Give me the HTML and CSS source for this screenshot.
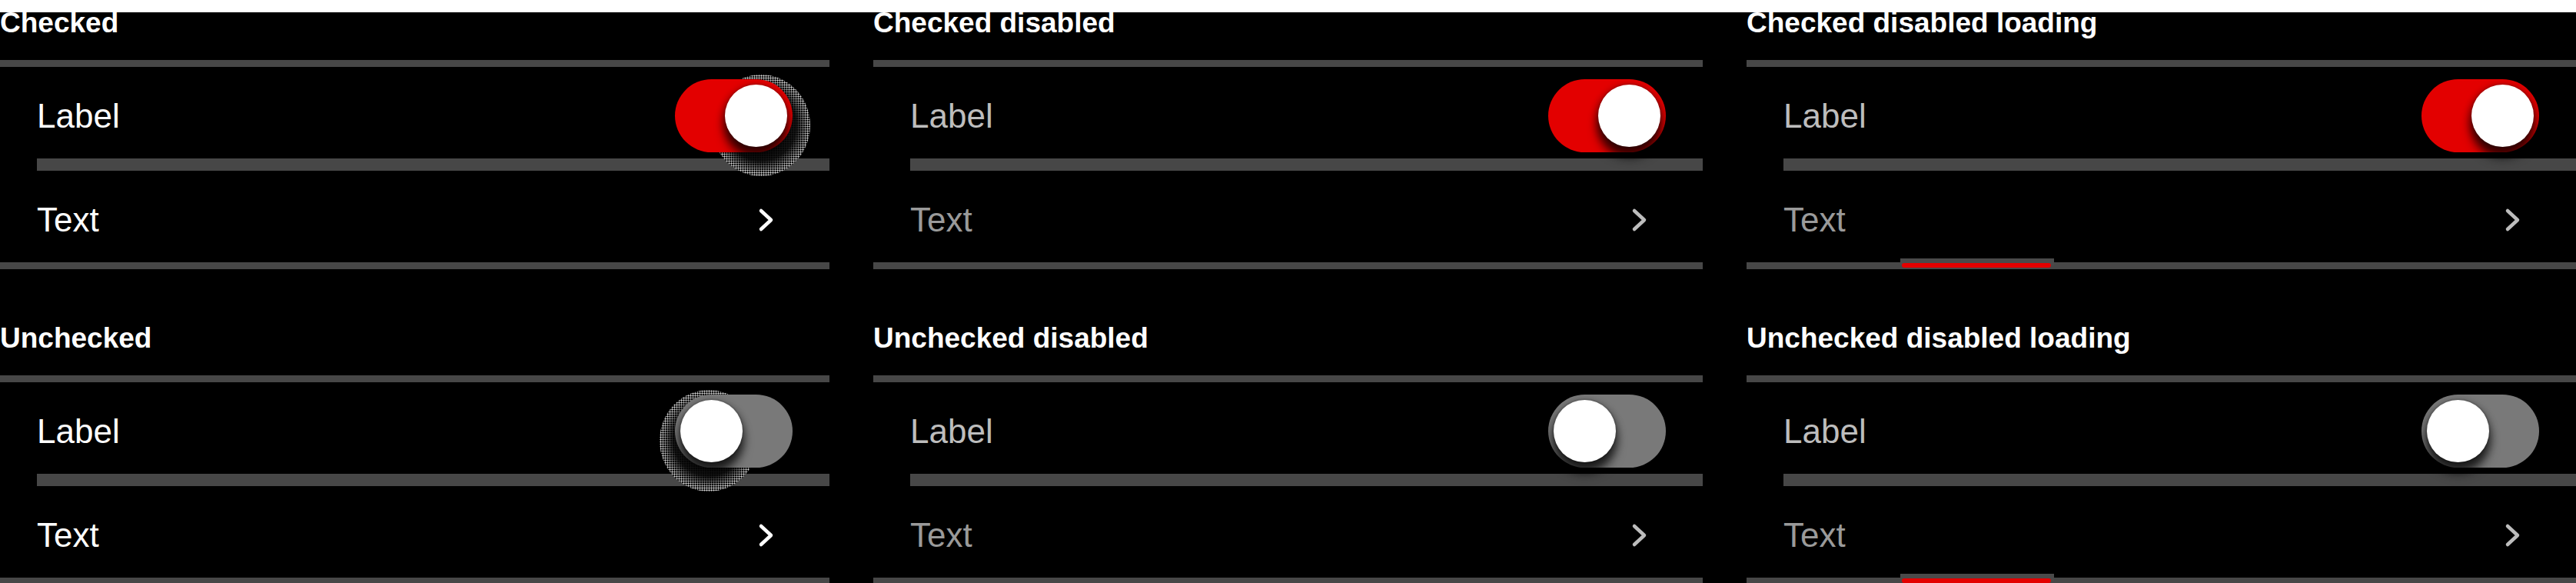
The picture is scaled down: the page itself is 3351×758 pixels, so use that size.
FILE: index.html
```html
<!DOCTYPE html>
<html lang="en">
<head>
<meta charset="utf-8">
<title>Switch list items</title>
<link rel="stylesheet" href="styles.css">
</head>
<body>
<div class="topband"></div>
<main class="board">
  <div class="column">
    <section class="group">
      <h2 class="group-title">Checked</h2>
      <div class="list">
        <div class="row row-label">
          <span class="label">Label</span>
          <span class="switch is-on has-focus"><span class="track"><span class="knob"></span></span></span>
        </div>
        <div class="row row-text">
          <span class="text">Text</span>
          <svg class="chev" viewBox="0 0 24 36" aria-hidden="true"><path d="M6 6 L19 18 L6 30"/></svg>
        </div>
      </div>
    </section>
    <section class="group">
      <h2 class="group-title">Unchecked</h2>
      <div class="list">
        <div class="row row-label">
          <span class="label">Label</span>
          <span class="switch is-off has-focus"><span class="track"><span class="knob"></span></span></span>
        </div>
        <div class="row row-text">
          <span class="text">Text</span>
          <svg class="chev" viewBox="0 0 24 36" aria-hidden="true"><path d="M6 6 L19 18 L6 30"/></svg>
        </div>
      </div>
    </section>
  </div>

  <div class="column muted">
    <section class="group">
      <h2 class="group-title">Checked disabled</h2>
      <div class="list">
        <div class="row row-label">
          <span class="label">Label</span>
          <span class="switch is-on"><span class="track"><span class="knob"></span></span></span>
        </div>
        <div class="row row-text">
          <span class="text">Text</span>
          <svg class="chev" viewBox="0 0 24 36" aria-hidden="true"><path d="M6 6 L19 18 L6 30"/></svg>
        </div>
      </div>
    </section>
    <section class="group">
      <h2 class="group-title">Unchecked disabled</h2>
      <div class="list">
        <div class="row row-label">
          <span class="label">Label</span>
          <span class="switch is-off"><span class="track"><span class="knob"></span></span></span>
        </div>
        <div class="row row-text">
          <span class="text">Text</span>
          <svg class="chev" viewBox="0 0 24 36" aria-hidden="true"><path d="M6 6 L19 18 L6 30"/></svg>
        </div>
      </div>
    </section>
  </div>

  <div class="column muted">
    <section class="group">
      <h2 class="group-title">Checked disabled loading</h2>
      <div class="list">
        <div class="row row-label">
          <span class="label">Label</span>
          <span class="switch is-on"><span class="track"><span class="knob"></span></span></span>
        </div>
        <div class="row row-text">
          <span class="text">Text</span>
          <svg class="chev" viewBox="0 0 24 36" aria-hidden="true"><path d="M6 6 L19 18 L6 30"/></svg>
        </div>
        <span class="loader"></span>
      </div>
    </section>
    <section class="group">
      <h2 class="group-title">Unchecked disabled loading</h2>
      <div class="list">
        <div class="row row-label">
          <span class="label">Label</span>
          <span class="switch is-off"><span class="track"><span class="knob"></span></span></span>
        </div>
        <div class="row row-text">
          <span class="text">Text</span>
          <svg class="chev" viewBox="0 0 24 36" aria-hidden="true"><path d="M6 6 L19 18 L6 30"/></svg>
        </div>
        <span class="loader"></span>
      </div>
    </section>
  </div>
</main>
</body>
</html>
```

FILE: styles.css
```css
html, body {
  margin: 0;
  padding: 0;
}

body {
  width: 3351px;
  height: 758px;
  overflow: hidden;
  background: #000;
  color: #fff;
  font-family: "Liberation Sans", Arial, sans-serif;
  position: relative;
}

.topband {
  position: absolute;
  top: 0;
  left: 0;
  right: 0;
  height: 16px;
  background: #fff;
  z-index: 5;
}

.board {
  display: grid;
  grid-template-columns: repeat(3, 1fr);
  column-gap: 57px;
  padding-top: 6px;
}

.column {
  display: flex;
  flex-direction: column;
  gap: 66px;
}

.group-title {
  margin: 0 0 24px;
  font-size: 37px;
  line-height: 48px;
  font-weight: 700;
  color: #fff;
  white-space: nowrap;
}

.list {
  position: relative;
  border-top: 9px solid #474747;
  border-bottom: 9px solid #474747;
  padding-left: 48px;
}

.row {
  display: flex;
  align-items: center;
  justify-content: space-between;
  height: 111px;
  padding-top: 8px;
  padding-right: 48px;
  font-size: 44px;
  line-height: 50px;
}

.row-label {
  border-bottom: 16px solid #474747;
}

.label,
.text {
  color: #fff;
}

.muted .label {
  color: #bdbdbd;
}

.muted .text {
  color: #9a9a9a;
}

.chev {
  width: 24px;
  height: 36px;
  margin-right: 23px;
  fill: none;
  stroke: #fff;
  stroke-width: 4.5;
  stroke-linecap: round;
  stroke-linejoin: round;
}

.muted .chev {
  stroke: #bdbdbd;
}

/* switch */
.switch {
  position: relative;
  width: 153px;
  height: 95px;
}

.track {
  position: relative;
  z-index: 1;
  display: flex;
  align-items: center;
  width: 153px;
  height: 95px;
  border-radius: 48px;
  padding: 0 7px;
  box-sizing: border-box;
}

.is-on .track {
  background: #e30000;
  justify-content: flex-end;
}

.is-off .track {
  background: #797979;
  justify-content: flex-start;
}

.knob {
  width: 81px;
  height: 81px;
  border-radius: 50%;
  background: #fff;
  box-shadow: 0 0 0 2px rgba(0, 0, 0, 0.08), 0 4px 8px 4px rgba(0, 0, 0, 0.28), 0 14px 14px rgba(0, 0, 0, 0.7);
}

.has-focus::before {
  content: "";
  position: absolute;
  z-index: 0;
  width: 128px;
  height: 132px;
  border-radius: 50%;
  top: -6px;
  background:
    radial-gradient(circle, rgba(8, 8, 8, 0.9) 0 50%, rgba(8, 8, 8, 0) 68%),
    radial-gradient(circle, rgba(255, 255, 255, 0.85) 0 0.8px, transparent 1.3px) 0 0 / 3px 3px,
    #141414;
}

.is-on.has-focus::before {
  left: 48px;
}

.is-off.has-focus::before {
  left: -20px;
}

/* loading indicator on the list edge */
.loader {
  position: absolute;
  left: 200px;
  bottom: -4px;
  width: 200px;
  height: 9px;
  background: #4a4a4a;
}

.loader::after {
  content: "";
  position: absolute;
  left: 2px;
  right: 4px;
  top: 6px;
  height: 6px;
  border-radius: 3px;
  background: #e30000;
}
```
